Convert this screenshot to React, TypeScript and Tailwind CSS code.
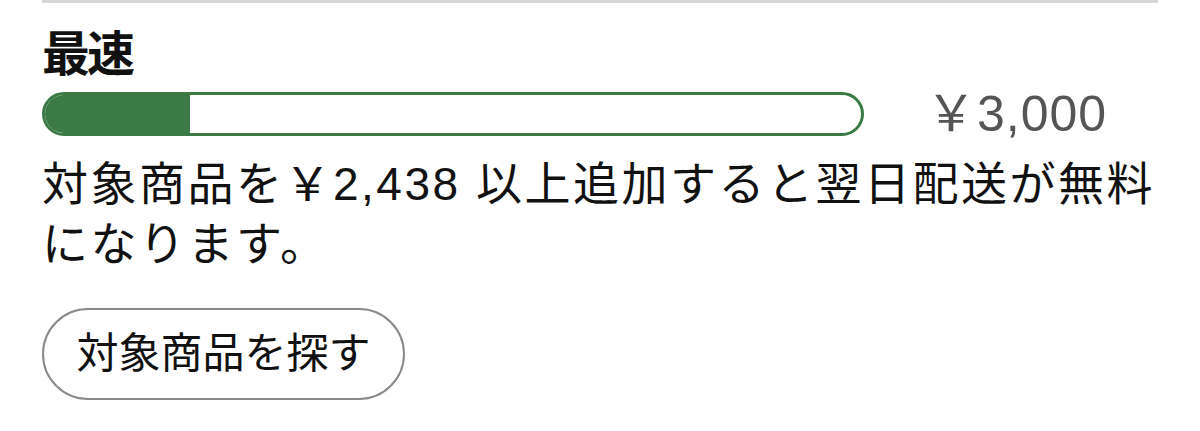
import React from 'react';

const font = { fontFamily: '"Liberation Sans", "Noto Sans CJK JP", sans-serif' };

export default function App() {
  const pct = 17.8;

  return (
    <div className="w-[1200px] h-[431px] bg-white overflow-hidden" style={font}>
      <div className="mx-[42px] w-[1116px]">
        <div className="h-[3px] bg-[#d6d6d6]" />

        <h2 className="mt-[28px] text-[48px] leading-none font-bold text-[#111] tracking-[-3px]">最速</h2>

        <div className="mt-[10px] flex items-center gap-[62px]">
          <div className="w-[822px] h-[44px] rounded-full border-[3px] border-[#3b7a45] overflow-hidden bg-white">
            <div className="h-full bg-[#3b7a45]" style={{ width: `${pct}%` }} />
          </div>
          <span className="text-[50px] leading-none text-[#555] tracking-[1px] whitespace-nowrap">￥3,000</span>
        </div>

        <p className="mt-[15px] text-[46px] leading-[60px] tracking-[2.5px] text-[#111]">
          対象商品を￥2,438 以上追加すると翌日配送が無料になります。
        </p>

        <button className="mt-[34px] w-[363px] h-[92px] rounded-full border-2 border-[#8a8a8a] bg-white text-[42px] leading-none text-[#111] flex items-center justify-center">
          対象商品を探す
        </button>
      </div>
    </div>
  );
}
